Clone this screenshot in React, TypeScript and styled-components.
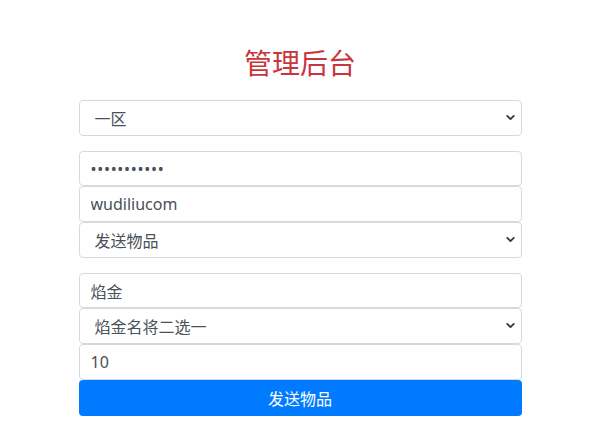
import styled, { createGlobalStyle } from "styled-components";
import { ChevronDown } from "lucide-react";

const GlobalStyle = createGlobalStyle`
    body {
        margin: 0;
        background: #fff;
        font-family: "Segoe UI", "Noto Sans", "Noto Sans CJK SC", sans-serif;
    }
`

interface SelectProps {
    options: string[];
}

function SelectBox({ options }: SelectProps) {
    return (
        <SelectWrap>
            <Select defaultValue={options[0]}>
                {options.map(o => <option key={o}>{o}</option>)}
            </Select>
            <Arrow size={13} strokeWidth={3.4} />
        </SelectWrap>
    )
}

function App() {
    return (
        <>
            <GlobalStyle />
            <Page>
                <Title>管理后台</Title>
                <Group>
                    <SelectBox options={['一区', '二区']} />
                </Group>
                <Group>
                    <Input type="password" defaultValue="12345678901" $spaced />
                    <Input type="text" defaultValue="wudiliucom" />
                    <SelectBox options={['发送物品', '发送邮件']} />
                </Group>
                <Group>
                    <Input type="text" defaultValue="焰金" />
                    <SelectBox options={['焰金名将二选一']} />
                    <Input type="text" defaultValue="10" />
                    <SubmitButton>发送物品</SubmitButton>
                </Group>
            </Page>
        </>
    )
}

const Page = styled.div`
    width: 443px;
    margin: 0 auto;
    padding-top: 45px;
    display: flex;
    flex-direction: column;
`

const Title = styled.h1`
    margin: 0 0 21px;
    text-align: center;
    font-size: 28px;
    line-height: 34px;
    font-weight: 400;
    color: #c8353c;
    font-family: "Noto Sans CJK SC", sans-serif;
`

const Group = styled.div`
    display: flex;
    flex-direction: column;
    margin-bottom: 15px;
`

const Input = styled.input<{ $spaced?: boolean }>`
    box-sizing: border-box;
    height: 35.7px;
    width: 100%;
    padding: 0 11px;
    border: 1px solid #d6dadf;
    border-radius: 4px;
    font-size: 16px;
    letter-spacing: ${p => p.$spaced ? '0.7px' : 'normal'};
    color: #495057;
    font-family: "Segoe UI", "Noto Sans", "Noto Sans CJK SC", sans-serif;
    background: #fff;
    outline: none;
`

const SelectWrap = styled.div`
    position: relative;
    width: 100%;
`

const Select = styled.select`
    box-sizing: border-box;
    appearance: none;
    height: 35.7px;
    width: 100%;
    padding: 0 30px 0 15px;
    border: 1px solid #d6dadf;
    border-radius: 4px;
    font-size: 16px;
    color: #495057;
    font-family: "Noto Sans CJK SC", sans-serif;
    background: #fff;
    outline: none;
`

const Arrow = styled(ChevronDown)`
    position: absolute;
    right: 5px;
    top: 11px;
    color: #343a40;
    pointer-events: none;
`

const SubmitButton = styled.button`
    height: 35.7px;
    width: 100%;
    border: none;
    border-radius: 4px;
    background: #007bff;
    color: #fff;
    font-size: 16px;
    font-family: "Noto Sans CJK SC", sans-serif;
    cursor: pointer;
`

export default App;
